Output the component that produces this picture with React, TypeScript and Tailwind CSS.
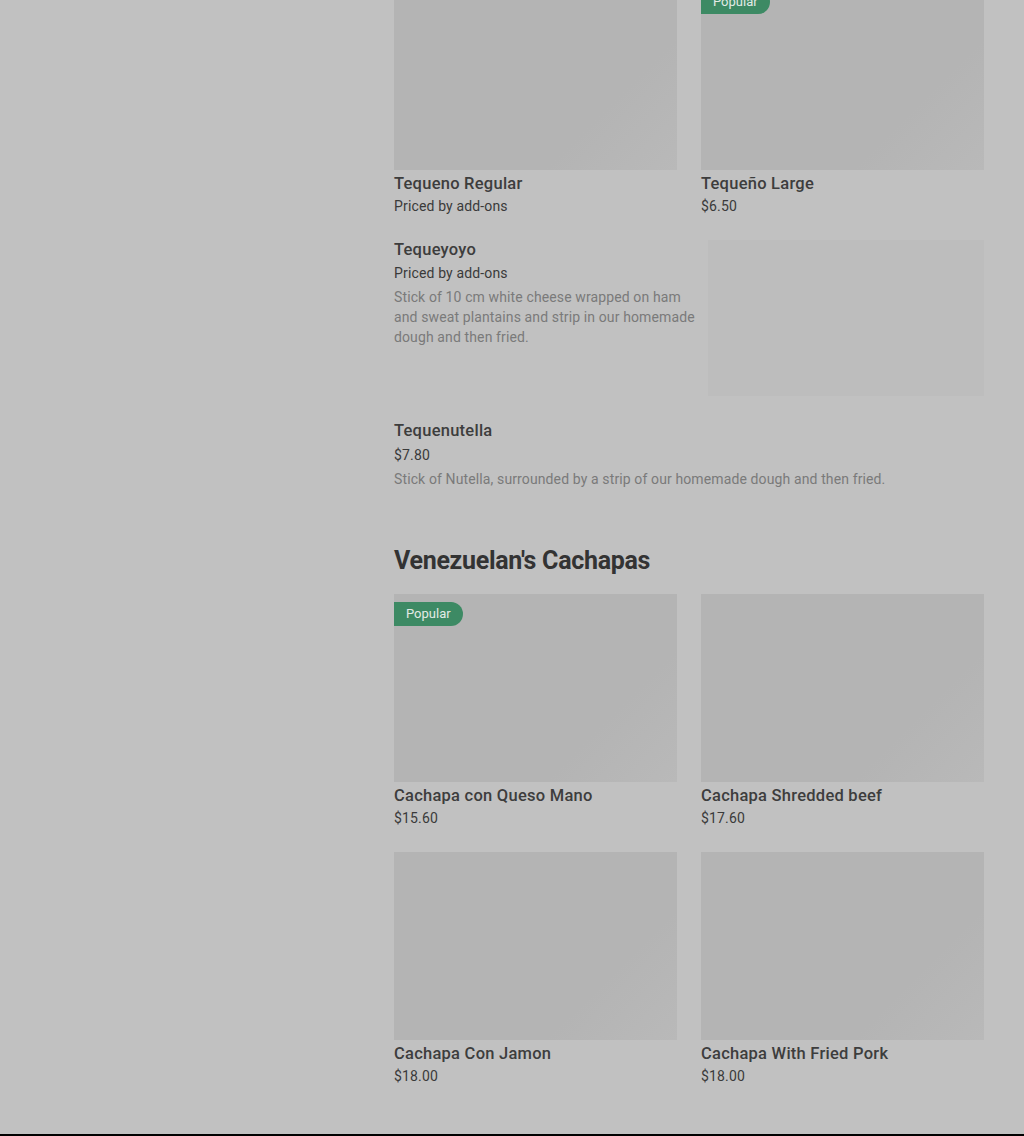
import React from "react";

type Item = { name: string; price: string; popular?: boolean };

const topRow: Item[] = [
  { name: "Tequeno Regular", price: "Priced by add-ons" },
  { name: "Tequeño Large", price: "$6.50", popular: true },
];

const cachapas: Item[] = [
  { name: "Cachapa con Queso Mano", price: "$15.60", popular: true },
  { name: "Cachapa Shredded beef", price: "$17.60" },
  { name: "Cachapa Con Jamon", price: "$18.00" },
  { name: "Cachapa With Fried Pork", price: "$18.00" },
];

const Badge = () => (
  <span className="absolute left-0 top-2 h-6 pl-3 pr-3 flex items-center rounded-r-full bg-[#3d8a64] text-[13px] text-[#e3ebe6]">
    Popular
  </span>
);

const Card = ({ item }: { item: Item }) => {
  return (
    <div className="flex flex-col">
      <div className="relative h-[188px] bg-[linear-gradient(135deg,#b4b4b4_72%,#b9b9b9)]">
        {item.popular && <Badge />}
      </div>
      <p className="mt-[2px] text-[16.5px] leading-6 font-medium tracking-[0.25px] text-[#3d3d3d]">{item.name}</p>
      <p className="text-[14px] leading-5 tracking-[0.15px] text-[#3a3a3a]">{item.price}</p>
    </div>
  );
};

export default function App() {
  return (
    <div
      className="relative h-[1136px] overflow-hidden bg-[#c1c1c1]"
      style={{ fontFamily: "Roboto, 'Liberation Sans', sans-serif" }}>
      <div className="flex">
        <div className="w-[394px] shrink-0" />
        <div className="w-[590px] -mt-[18px]">
          <div className="grid grid-cols-2 gap-x-6">
            {topRow.map((item, i) => (
              <Card key={i} item={item} />
            ))}
          </div>

          {/* Tequeyoyo */}
          <div className="mt-[24px] flex justify-between">
            <div className="w-[306px]">
              <p className="text-[16.5px] leading-5 font-medium tracking-[0.25px] text-[#3d3d3d]">Tequeyoyo</p>
              <p className="mt-[3px] text-[14px] leading-5 tracking-[0.15px] text-[#3a3a3a]">Priced by add-ons</p>
              <p className="mt-[4px] text-[14px] leading-5 tracking-[0.12px] text-[#7a7a7a]">
                Stick of 10 cm white cheese wrapped on ham and sweat plantains and strip in our homemade
                dough and then fried.
              </p>
            </div>
            <div className="w-[276px] h-[156px] bg-[#bdbdbd]" />
          </div>

          {/* Tequenutella */}
          <div className="mt-[25px]">
            <p className="text-[16.5px] leading-5 font-medium tracking-[0.25px] text-[#3d3d3d]">Tequenutella</p>
            <p className="mt-[4px] text-[14px] leading-5 tracking-[0.15px] text-[#3a3a3a]">$7.80</p>
            <p className="mt-[4px] text-[14px] leading-5 tracking-[0.12px] text-[#7a7a7a]">
              Stick of Nutella, surrounded by a strip of our homemade dough and then fried.
            </p>
          </div>

          <h2 className="mt-[56px] text-[25px] leading-8 font-bold tracking-[-0.3px] text-[#333333]">
            Venezuelan's Cachapas
          </h2>

          <div className="mt-[17px] grid grid-cols-2 gap-x-6 gap-y-[24px]">
            {cachapas.map((item, i) => (
              <Card key={i} item={item} />
            ))}
          </div>
        </div>
      </div>
      <div className="absolute bottom-0 left-0 right-0 h-[2px] bg-black" />
    </div>
  );
}
